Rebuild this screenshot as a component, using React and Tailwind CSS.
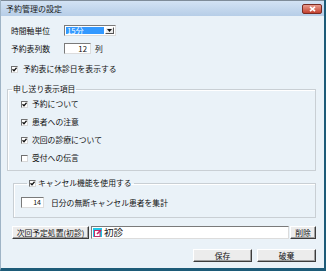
import React from 'react'

const font = "font-['Noto_Sans_CJK_JP','Noto_Sans_CJK_SC',sans-serif]"

const Check = ({ checked }) => (
  <span className="w-[7px] h-[7px] shrink-0 bg-white border border-[#707070] border-r-[#d8d8d8] border-b-[#d8d8d8] flex items-center justify-center">
    {checked && (
      <svg width="5" height="5" viewBox="0 0 5 5">
        <path d="M0.5 2.3 L2 3.8 L4.6 0.8" stroke="#111" strokeWidth="1.3" fill="none" />
      </svg>
    )}
  </span>
)

const Btn = ({ children, className }) => (
  <div
    className={
      'h-full flex items-center justify-center bg-[#ececec] border border-t-white border-l-white border-r-[#3c3c3c] border-b-[#3c3c3c] shadow-[inset_-1px_-1px_0_#a0a0a0] leading-none ' +
      className
    }
  >
    {children}
  </div>
)

const Row = ({ checked, label }) => (
  <div className="h-[18px] flex items-center pl-[13px]">
    <Check checked={checked} />
    <span className="ml-[4px] leading-none">{label}</span>
  </div>
)

export default function App() {
  return (
    <div
      className={`w-[326px] h-[271px] bg-[#eaf2f8] border-l border-l-[#9fb4c6] border-r-2 border-r-[#1d5b78] border-b-[3px] border-b-[#1d5b78] text-[7.8px] text-[#111] flex flex-col ${font}`}
    >
      {/* title bar */}
      <div className="h-[16px] shrink-0 flex items-center justify-between bg-gradient-to-b from-[#d3e3f4] to-[#b6cde7] border-t border-[#7f8c99]">
        <span className="ml-[5px] leading-none text-[8px] text-[#1b1b1b]">予約管理の設定</span>
        <div className="mr-[2px] w-[20px] h-[10px] rounded-[2px] border border-[#7a2b22] bg-gradient-to-b from-[#e99a8c] to-[#c23f2e] flex items-center justify-center">
          <svg width="7" height="6" viewBox="0 0 7 6">
            <path d="M1 0.8 L6 5.2 M6 0.8 L1 5.2" stroke="white" strokeWidth="1.6" />
          </svg>
        </div>
      </div>

      {/* row 1 */}
      <div className="mt-[9px] h-[11px] flex items-center">
        <span className="ml-[10px] w-[53px] leading-none">時間軸単位</span>
        <div className="w-[52px] h-full bg-white border border-[#7a7a7a] border-r-[#dcdcdc] border-b-[#dcdcdc] flex items-stretch p-[1px]">
          <div className="flex-1 bg-[#3399ff] text-white leading-none flex items-center pl-[1px]">
            15分
          </div>
          <div className="w-[9px] ml-[1px] bg-[#ececec] border border-t-white border-l-white border-r-[#555] border-b-[#555] flex items-center justify-center">
            <svg width="5" height="3" viewBox="0 0 5 3">
              <path d="M0 0 H5 L2.5 3 Z" fill="#111" />
            </svg>
          </div>
        </div>
      </div>

      {/* row 2 */}
      <div className="mt-[7px] h-[11px] flex items-center">
        <span className="ml-[10px] w-[53px] leading-none">予約表列数</span>
        <div className="w-[27px] h-full bg-white border border-[#7a7a7a] border-r-[#dcdcdc] border-b-[#dcdcdc] flex items-center justify-end pr-[3px] leading-none">
          12
        </div>
        <span className="ml-[4px] leading-none">列</span>
      </div>

      {/* show holidays */}
      <div className="mt-[10px] h-[10px] flex items-center pl-[10px]">
        <Check checked />
        <span className="ml-[5px] leading-none">予約表に休診日を表示する</span>
      </div>

      {/* group 1 */}
      <fieldset className="mt-[9px] ml-[6px] w-[309px] border border-[#c9cfd4] shadow-[inset_1px_1px_0_white] pb-[3px]">
        <legend className="ml-[4px] px-[1px] h-[12px] flex items-center leading-none">申し送り表示項目</legend>
        <Row checked label="予約について" />
        <Row checked label="患者への注意" />
        <Row checked label="次回の診療について" />
        <Row label="受付への伝言" />
      </fieldset>

      {/* group 2 */}
      <fieldset className="mt-[6px] ml-[12px] w-[303px] border border-[#c9cfd4] shadow-[inset_1px_1px_0_white] pt-[8px] pb-[9px] pl-[7px]">
        <legend className="ml-[6px] px-[2px] h-[12px] flex items-center">
          <Check checked />
          <span className="ml-[2px] leading-none">キャンセル機能を使用する</span>
        </legend>
        <div className="h-[11px] flex items-center">
          <div className="w-[23px] h-full bg-white border border-[#7a7a7a] border-r-[#dcdcdc] border-b-[#dcdcdc] flex items-center justify-end pr-[2px] leading-none text-[7px]">
            14
          </div>
          <span className="ml-[7px] leading-none">日分の無断キャンセル患者を集計</span>
        </div>
      </fieldset>

      {/* next treatment */}
      <div className="mt-[8px] h-[13px] flex items-stretch">
        <Btn className="ml-[11px] w-[77px]">次回予定処置(初診)</Btn>
        <div className="ml-[2px] w-[198px] bg-white border border-[#7a7a7a] border-r-[#dcdcdc] border-b-[#dcdcdc] flex items-center">
          <div className="ml-[1px] w-[9px] h-[9px] bg-[#20c8e8] flex items-center justify-center">
            <svg width="8" height="8" viewBox="0 0 8 8">
              <rect x="0.5" y="1.5" width="5.5" height="6" fill="white" stroke="#c0306a" />
              <path d="M3 5 L7 1" stroke="#d02060" strokeWidth="1.6" />
            </svg>
          </div>
          <span className="ml-[2px] leading-none text-[9.5px]">初診</span>
        </div>
        <Btn className="ml-[1px] w-[26px]">削除</Btn>
      </div>

      {/* save / discard */}
      <div className="mt-[10px] h-[13px] flex items-stretch justify-end pr-[8px]">
        <Btn className="w-[59px]">保存</Btn>
        <Btn className="ml-[5px] w-[59px]">破棄</Btn>
      </div>
    </div>
  )
}
